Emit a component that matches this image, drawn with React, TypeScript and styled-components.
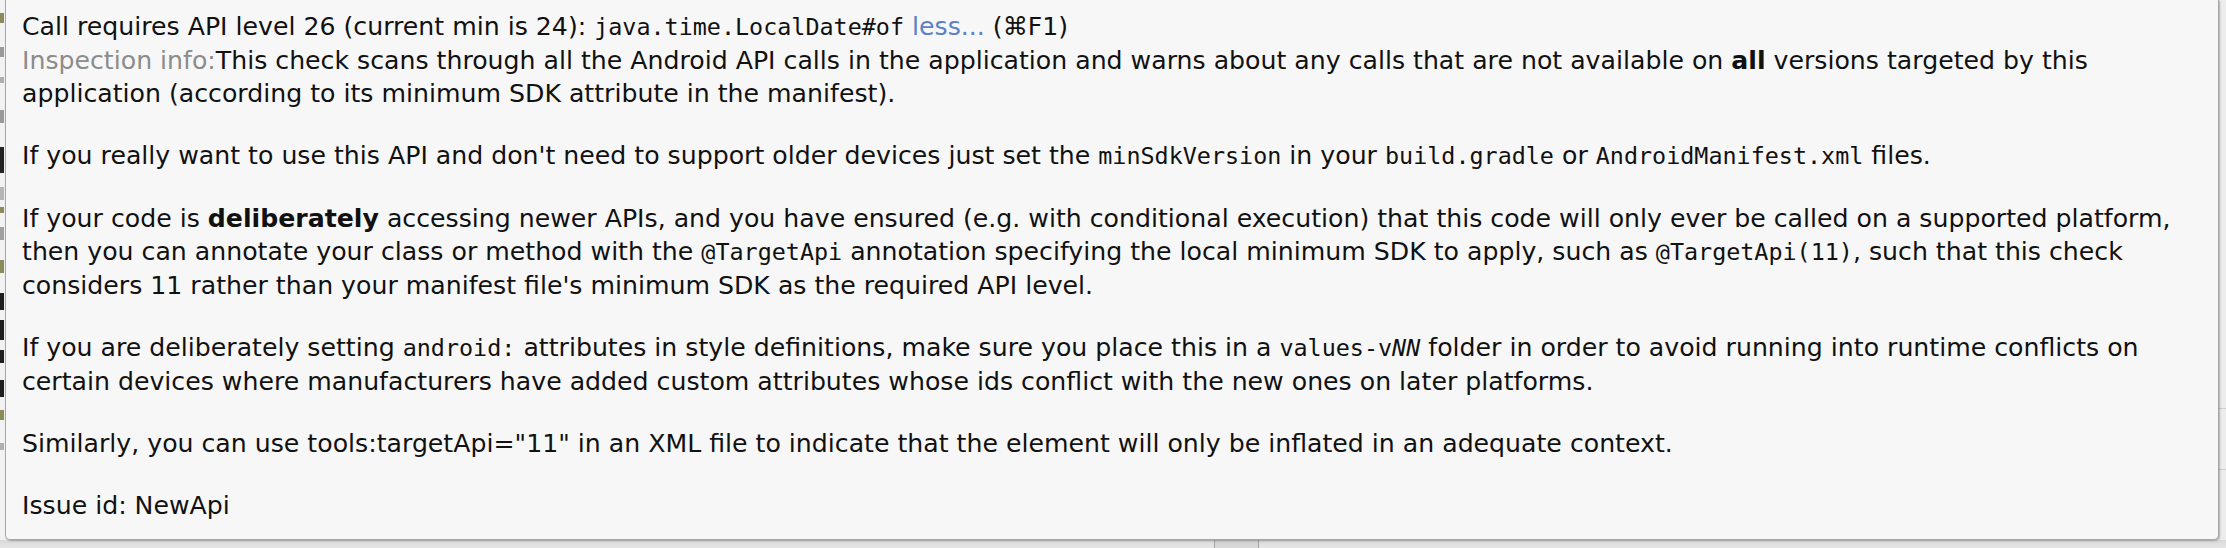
import React from "react";
import styled, { createGlobalStyle } from "styled-components";

const Global = createGlobalStyle`
  html, body { margin: 0; padding: 0; background: #ececec; }
  body { width: 2226px; height: 548px; overflow: hidden; }
  #root { width: 2226px; height: 548px; }
`;

const Screen = styled.div`
  width: 2226px;
  height: 548px;
  background: #ececec;
  display: flex;
  flex-direction: column;
  overflow: hidden;
`;

const Main = styled.div`
  display: flex;
  height: 540px;
  flex: none;
`;

const EditorEdge = styled.div`
  width: 5px;
  flex: none;
  background: #f2f2f2;
  display: flex;
  flex-direction: column;
`;

const Mark = styled.div<{ $top: number; $h: number; $c: string }>`
  margin-top: ${(p) => p.$top}px;
  height: ${(p) => p.$h}px;
  width: 4px;
  background: ${(p) => p.$c};
`;

const Tooltip = styled.div`
  width: 2214px;
  height: 540px;
  flex: none;
  box-sizing: border-box;
  background: #f7f7f7;
  border: 1px solid #a7a7a7;
  border-top: none;
  border-radius: 0 0 5px 5px;
  box-shadow: 1px 1px 2px rgba(0, 0, 0, 0.28);
  padding: 10px 0 0 16px;
  font-family: "DejaVu Sans", "Liberation Sans", sans-serif;
  font-size: 25.2px;
  line-height: 33px;
  color: #111;
  white-space: nowrap;
  position: relative;
  z-index: 1;
`;

const RightEdge = styled.div`
  flex: 1;
  background: #ededed;
  display: flex;
  flex-direction: column;
`;

const Rule = styled.div<{ $top: number }>`
  margin-top: ${(p) => p.$top}px;
  height: 1px;
  background: #cfcfcf;
`;

const Para = styled.p`
  margin: 0 0 29px 0;
  &:last-child { margin-bottom: 0; }
`;

const Code = styled.code`
  font-family: "DejaVu Sans Mono", "Liberation Mono", monospace;
  font-size: 23.4px;
`;

const Muted = styled.span`
  color: #8c8c8c;
`;

const Link = styled.a`
  color: #5b82c8;
  text-decoration: none;
`;

const Strong = styled.b`
  font-weight: bold;
`;

const BottomBar = styled.div`
  flex: 1;
  display: flex;
  background: linear-gradient(#d9d9d9, #e6e6e6);
`;

const BarSegment = styled.div<{ $w?: number; $active?: boolean }>`
  ${(p) => (p.$w ? `width: ${p.$w}px; flex: none;` : "flex: 1;")}
  background: ${(p) => (p.$active ? "linear-gradient(#cfcfcf, #dadada)" : "transparent")};
  border-right: 1px solid #a5a5a5;
  &:last-child { border-right: none; }
`;

const marks = [
  { top: 13, h: 10, c: "#8a8a5a" },
  { top: 24, h: 10, c: "#9a9a9a" },
  { top: 20, h: 6, c: "#b0b0b0" },
  { top: 27, h: 13, c: "#9a9a9a" },
  { top: 24, h: 26, c: "#222" },
  { top: 14, h: 13, c: "#b5b5b5" },
  { top: 7, h: 6, c: "#8a8a5a" },
  { top: 14, h: 13, c: "#a0a0a0" },
  { top: 20, h: 13, c: "#8a8a5a" },
  { top: 20, h: 17, c: "#1e1e1e" },
  { top: 10, h: 20, c: "#1e1e1e" },
  { top: 10, h: 13, c: "#1e1e1e" },
  { top: 17, h: 17, c: "#1e1e1e" },
  { top: 13, h: 10, c: "#8a8a5a" },
  { top: 23, h: 7, c: "#b0b0b0" },
];

export default function App() {
  return (
    <Screen>
      <Global />
      <Main>
        <EditorEdge>
          {marks.map((m, i) => (
            <Mark key={i} $top={m.top} $h={m.h} $c={m.c} />
          ))}
        </EditorEdge>
        <Tooltip>
          <Para>
            Call requires API level 26 (current min is 24): <Code>java.time.LocalDate#of</Code>{" "}
            <Link href="#">less...</Link> (⌘F1)
            <br />
            <Muted>Inspection info:</Muted>This check scans through all the Android API calls in the
            application and warns about any calls that are not available on <Strong>all</Strong> versions
            targeted by this
            <br />
            application (according to its minimum SDK attribute in the manifest).
          </Para>
          <Para>
            If you really want to use this API and don't need to support older devices just set the{" "}
            <Code>minSdkVersion</Code> in your <Code>build.gradle</Code> or <Code>AndroidManifest.xml</Code>{" "}
            files.
          </Para>
          <Para>
            If your code is <Strong>deliberately</Strong> accessing newer APIs, and you have ensured (e.g. with
            conditional execution) that this code will only ever be called on a supported platform,
            <br />
            then you can annotate your class or method with the <Code>@TargetApi</Code> annotation specifying
            the local minimum SDK to apply, such as <Code>@TargetApi(11)</Code>, such that this check
            <br />
            considers 11 rather than your manifest file's minimum SDK as the required API level.
          </Para>
          <Para>
            If you are deliberately setting <Code>android:</Code> attributes in style definitions, make sure
            you place this in a{" "}
            <Code>
              values-v<i>NN</i>
            </Code>{" "}
            folder in order to avoid running into runtime conflicts on
            <br />
            certain devices where manufacturers have added custom attributes whose ids conflict with the new
            ones on later platforms.
          </Para>
          <Para>
            Similarly, you can use tools:targetApi="11" in an XML file to indicate that the element will only
            be inflated in an adequate context.
          </Para>
          <Para>Issue id: NewApi</Para>
        </Tooltip>
        <RightEdge>
          <Rule $top={408} />
          <Rule $top={60} />
        </RightEdge>
      </Main>
      <BottomBar>
        <BarSegment $w={1214} />
        <BarSegment $w={43} $active />
        <BarSegment />
      </BottomBar>
    </Screen>
  );
}
